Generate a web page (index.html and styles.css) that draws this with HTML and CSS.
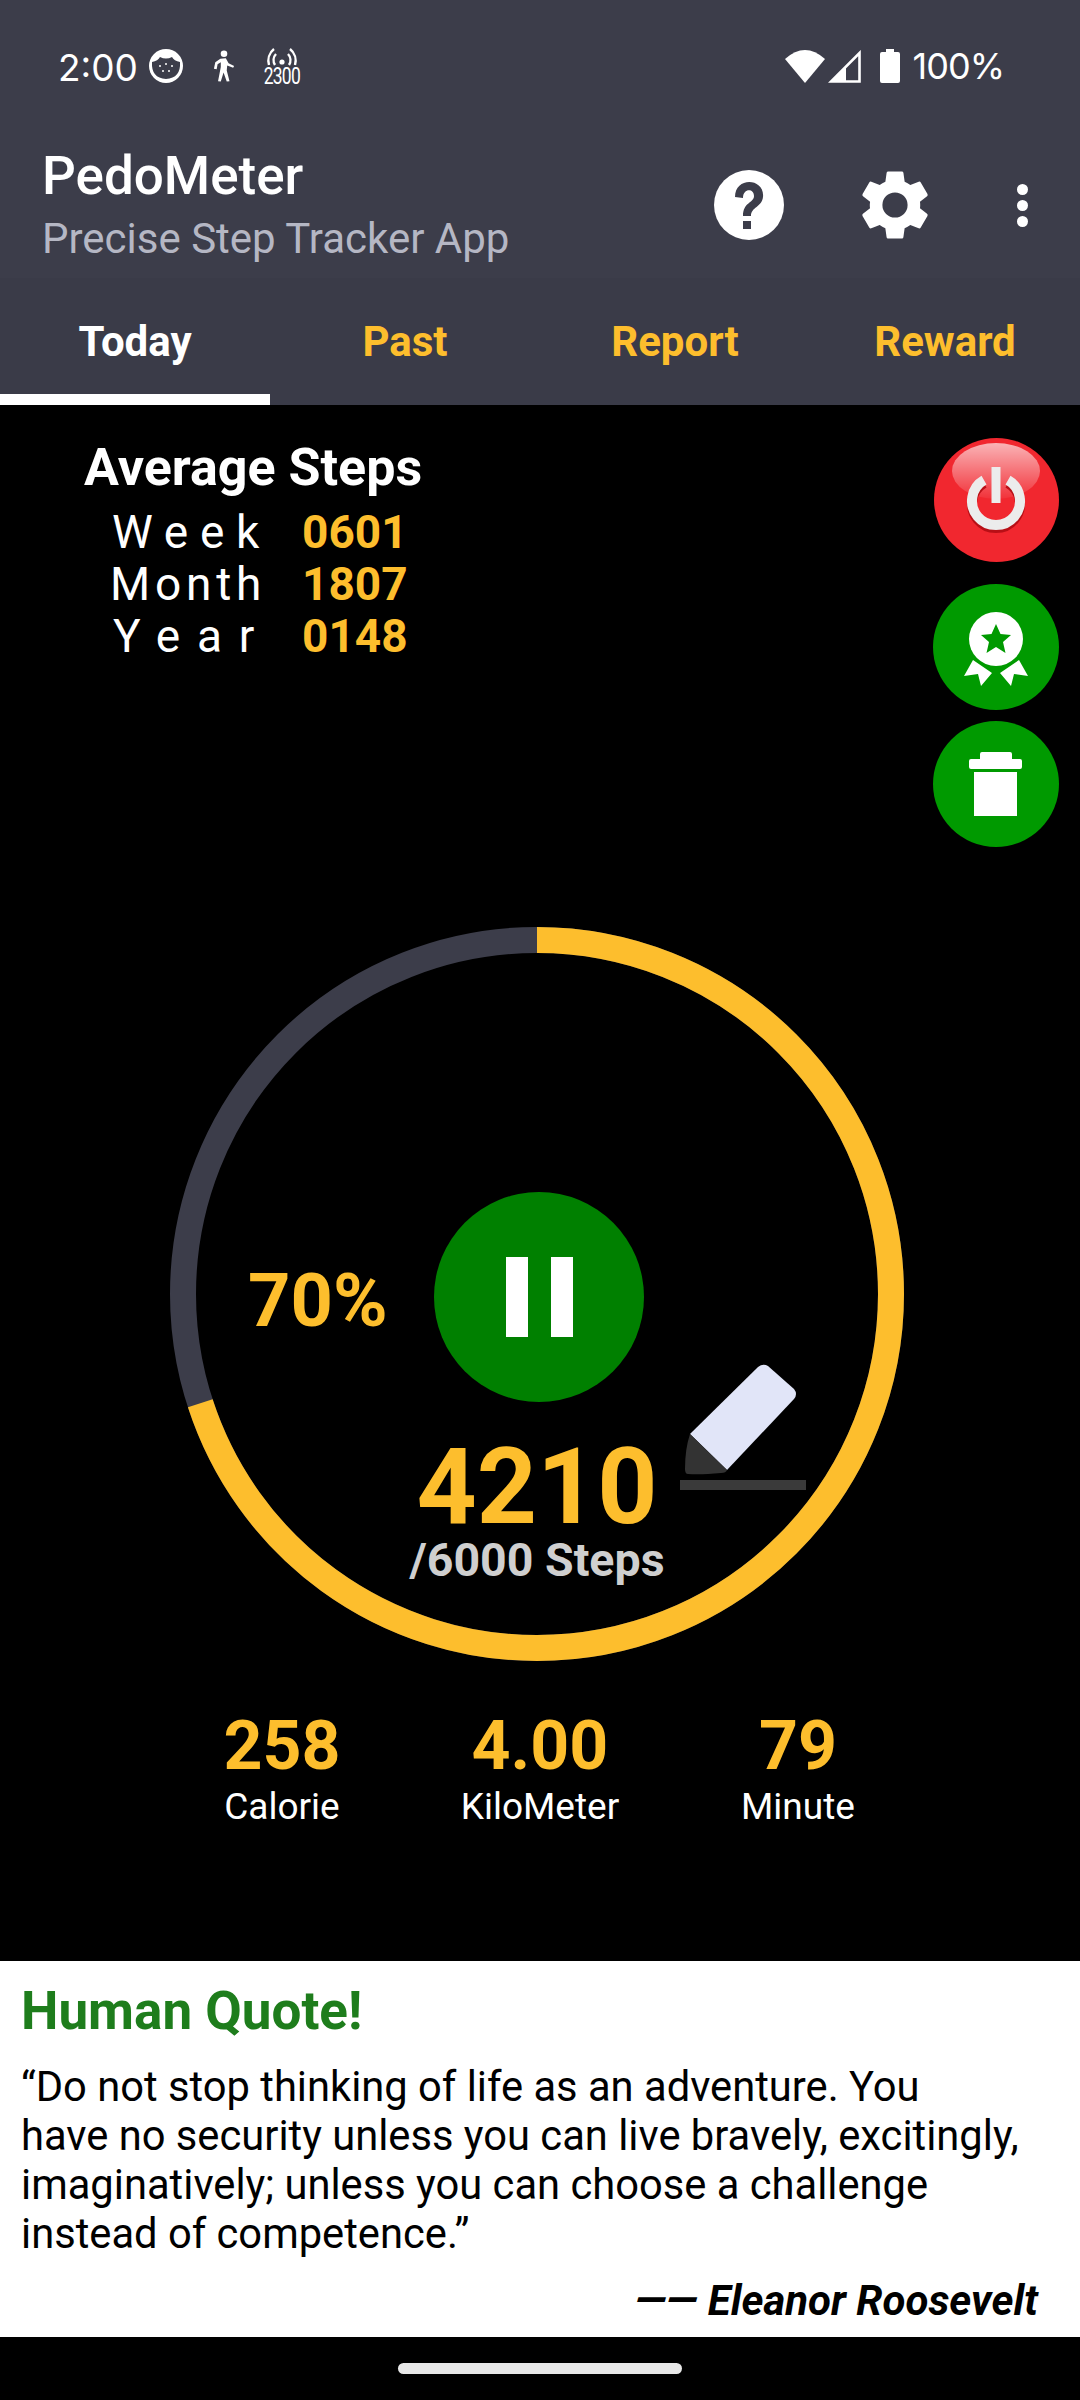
FILE: index.html
```html
<!DOCTYPE html>
<html lang="en">
<head>
    <meta charset="UTF-8">
    <meta name="viewport" content="width=device-width, initial-scale=1.0">
    <title>PedoMeter</title>
    <link rel="stylesheet" href="styles.css">
</head>
<body>
    <div class="top">
        <div class="status">
            <div class="status-side">
                <span class="time">2:00</span>
                <svg class="st-face" viewBox="0 0 34 34"><circle cx="17" cy="17" r="17" fill="#fff"/><path d="M3 13 Q9 12 11 8 Q17 11 23 8 Q25 12 31 13 Q32 29 17 30 Q2 29 3 13Z" fill="#3c3d4a"/><g fill="#fff"><circle cx="11" cy="17" r="1"/><circle cx="17" cy="15" r="1"/><circle cx="23" cy="17" r="1"/><circle cx="14" cy="22" r="1"/><circle cx="20" cy="22" r="1"/></g></svg>
                <svg class="st-walk" viewBox="0 0 24 34"><circle cx="12" cy="3.6" r="3.6" fill="#fff"/><path d="M8 9 L14 8.5 L17 14 L23 17 L22 19 L15.5 16.5 L15 22 L18 33.5 L15 34 L11.5 24 L8.5 34 L5.5 33.5 L8.5 18 L8.5 13 L5 15 L4 20.5 L1 20 L2.5 13Z" fill="#fff"/></svg>
                <span class="st-hotspot">
                    <svg viewBox="0 0 34 20"><g fill="none" stroke="#fff" stroke-width="2.4"><path d="M10 17 A9 9 0 0 1 11 6"/><path d="M24 17 A9 9 0 0 0 23 6"/><path d="M4 17 A15 15 0 0 1 9 1"/><path d="M30 17 A15 15 0 0 0 25 1"/></g><circle cx="17" cy="14" r="2.6" fill="#fff"/></svg>
                    <span>2300</span>
                </span>
            </div>
            <div class="status-side">
                <svg class="st-wifi" viewBox="0 0 40 33"><path d="M0 9 Q20 -9 40 9 L20 33Z" fill="#fff"/></svg>
                <svg class="st-signal" viewBox="0 0 33 33"><path d="M31.5 3 V31.5 H3Z" fill="none" stroke="#fff" stroke-width="2.6"/><path d="M18 16 V32 H2Z" fill="#fff"/></svg>
                <svg class="st-batt" viewBox="0 0 20 34"><path d="M6 0 H14 V3 H18 Q20 3 20 5 V32 Q20 34 18 34 H2 Q0 34 0 32 V5 Q0 3 2 3 H6Z" fill="#fff"/></svg>
                <span class="batt-text">100%</span>
            </div>
        </div>

        <div class="appbar">
            <div class="titles">
                <div class="app-name">PedoMeter</div>
                <div class="app-sub">Precise Step Tracker App</div>
            </div>
            <div class="actions">
                <svg class="help" viewBox="0 0 70 70"><circle cx="35" cy="35" r="35" fill="#fff"/><path d="M21 27 C21 6 51 8 49 27 C48 37 37 37 37 46 H29 C29 32 40 33 40 26 C40 18 29 18 29 28Z" fill="#3c3d4a"/><rect x="29" y="51" width="8" height="8" fill="#3c3d4a"/></svg>
                <svg class="gear" viewBox="0 0 24 24"><path fill="#fff" d="M19.14 12.94c.04-.3.06-.61.06-.94s-.02-.64-.07-.94l2.03-1.58a.49.49 0 0 0 .12-.61l-1.92-3.32a.49.49 0 0 0-.59-.22l-2.39.96c-.5-.38-1.03-.7-1.62-.94l-.36-2.54a.48.48 0 0 0-.48-.41h-3.84a.48.48 0 0 0-.47.41l-.36 2.54c-.59.24-1.13.57-1.62.94l-2.39-.96a.49.49 0 0 0-.59.22L2.74 8.87a.48.48 0 0 0 .12.61l2.03 1.58c-.05.3-.09.63-.09.94s.02.64.07.94l-2.03 1.58a.49.49 0 0 0-.12.61l1.92 3.32c.12.22.37.29.59.22l2.39-.96c.5.38 1.03.7 1.62.94l.36 2.54c.05.24.24.41.48.41h3.84c.24 0 .44-.17.47-.41l.36-2.54c.59-.24 1.13-.56 1.62-.94l2.39.96c.22.08.47 0 .59-.22l1.92-3.32a.48.48 0 0 0-.12-.61l-2.01-1.58zM12 15.6A3.6 3.6 0 1 1 12 8.4a3.6 3.6 0 0 1 0 7.2z"/></svg>
                <div class="dots"><i></i><i></i><i></i></div>
            </div>
        </div>

        <div class="tabs">
            <div class="tab active">Today</div>
            <div class="tab">Past</div>
            <div class="tab">Report</div>
            <div class="tab">Reward</div>
        </div>
    </div>

    <div class="main">
        <div class="upper">
            <div class="avg">
                <h2>Average Steps</h2>
                <div class="avg-row"><span class="avg-label week">Week</span><b>0601</b></div>
                <div class="avg-row"><span class="avg-label month">Month</span><b>1807</b></div>
                <div class="avg-row"><span class="avg-label year">Year</span><b>0148</b></div>
            </div>
            <div class="fabs">
                <svg class="fab-power" viewBox="0 0 125 124">
                    <defs>
                        <linearGradient id="gloss" x1="0" y1="0" x2="0" y2="1"><stop offset="0" stop-color="#fff" stop-opacity=".65"/><stop offset="1" stop-color="#fff" stop-opacity=".05"/></linearGradient>
                    </defs>
                    <ellipse cx="62.5" cy="62" rx="62.5" ry="62" fill="#f1272f"/>
                    <ellipse cx="62" cy="33" rx="44" ry="28" fill="url(#gloss)"/>
                    <path d="M74 45.200 A24 24 0 1 1 50 45.200" fill="none" stroke="#b80f16" stroke-width="10"/>
                    <path d="M74 42.200 A24 24 0 1 1 50 42.200" fill="none" stroke="#ececec" stroke-width="10"/>
                    <rect x="57.500" y="29" width="9" height="36" fill="#ececec"/>
                </svg>
                <svg class="fab-medal" viewBox="0 0 126 126">
                    <circle cx="63" cy="63" r="63" fill="#009a00"/>
                    <circle cx="63" cy="55" r="27" fill="#fff"/>
                    <path d="M63 40 L67.500 50 L78 51 L70 58 L72.500 69 L63 63 L53.500 69 L56 58 L48 51 L58.500 50Z" fill="#009a00"/>
                    <path d="M40 76 L59 89 L48 102 L45 90 L31 92Z" fill="#fff"/>
                    <path d="M86 76 L67 89 L78 102 L81 90 L95 92Z" fill="#fff"/>
                </svg>
                <svg class="fab-trash" viewBox="0 0 126 126">
                    <circle cx="63" cy="63" r="63" fill="#009a00"/>
                    <path d="M47 33 Q47 31 49 31 H77 Q79 31 79 33 V38 H87 Q89 38 89 40 V46 Q89 48 87 48 H38 Q36 48 36 46 V40 Q36 38 38 38 H47Z" fill="#fff"/>
                    <rect x="41" y="51" width="43" height="44" fill="#fff"/>
                </svg>
            </div>
        </div>

        <div class="ring-wrap">
            <svg class="ring" viewBox="0 0 734 734">
                <circle cx="367" cy="367" r="354" fill="none" stroke="#3c3d4a" stroke-width="26"/>
                <circle cx="367" cy="367" r="354" fill="none" stroke="#fdbe2d" stroke-width="26" pathLength="100" stroke-dasharray="70 30" transform="rotate(-90 367 367)"/>
            </svg>
            <div class="percent">70%</div>
            <div class="pause"><i></i><i></i></div>
            <svg class="edit" viewBox="0 0 112 112">
                <path d="M5 70 L73 3 Q78 -1 83 2 L109 25 Q113 30 109 35 L42 106Z" fill="#e1e5f8"/>
                <path d="M5 70 L42 106 Q41 109 36 109 Q15 111 3 110 Q0 110 0 105 Q0 85 5 70Z" fill="#333"/>
            </svg>
            <div class="edit-line"></div>
            <div class="count">4210</div>
            <div class="goal">/6000 Steps</div>
        </div>

        <div class="stats">
            <div class="stat"><b>258</b><span>Calorie</span></div>
            <div class="stat"><b>4.00</b><span>KiloMeter</span></div>
            <div class="stat"><b>79</b><span>Minute</span></div>
        </div>
    </div>

    <div class="quote">
        <h3>Human Quote!</h3>
        <p>“Do not stop thinking of life as an adventure. You<br>have no security unless you can live bravely, excitingly,<br>imaginatively; unless you can choose a challenge<br>instead of competence.”</p>
        <div class="author">—— Eleanor Roosevelt</div>
    </div>

    <div class="navbar"><div class="pill"></div></div>
</body>
</html>
```

FILE: styles.css
```css
* {
    box-sizing: border-box;
}

body {
    margin: 0;
    width: 1080px;
    height: 2400px;
    background: #000;
    font-family: Roboto, sans-serif;
    color: #fff;
    display: flex;
    flex-direction: column;
    overflow: hidden;
}

.top {
    background: #3c3d4a;
    height: 405px;
    flex: none;
}

.status {
    height: 132px;
    padding: 0 76px 0 58px;
    display: flex;
    justify-content: space-between;
    align-items: center;
}

.status-side {
    display: flex;
    align-items: center;
}

.time {
    font-family: Inter, sans-serif;
    font-size: 37px;
    margin-top: 2px;
    width: 91px;
}

.st-face {
    width: 34px;
    height: 34px;
    margin-right: 30px;
}

.st-walk {
    width: 22px;
    height: 34px;
    margin-right: 28px;
}

.st-hotspot {
    display: flex;
    flex-direction: column;
    align-items: center;
    width: 37px;
    margin-top: 2px;
}

.st-hotspot svg {
    width: 34px;
    height: 20px;
}

.st-hotspot span {
    font-size: 23px;
    line-height: 18px;
    letter-spacing: -1px;
    transform: scaleX(.76);
}

.st-wifi {
    width: 40px;
    height: 33px;
    margin-right: 3px;
}

.st-signal {
    width: 33px;
    height: 33px;
    margin-right: 19px;
}

.st-batt {
    width: 20px;
    height: 34px;
    margin-right: 13px;
}

.batt-text {
    font-family: Inter, sans-serif;
    font-size: 36px;
    letter-spacing: -1px;
}

.appbar {
    height: 146px;
    padding: 0 52px 0 42px;
    display: flex;
    justify-content: space-between;
    align-items: center;
}

.app-name {
    font-size: 53px;
    font-weight: 500;
    line-height: 58px;
    margin-top: -2px;
}

.app-sub {
    font-size: 42px;
    line-height: 44px;
    margin-top: 12px;
    color: #b5b7c4;
}

.actions {
    display: flex;
    align-items: center;
    margin-top: 0;
}

.help {
    width: 70px;
    height: 70px;
    margin-right: 69px;
}

.gear {
    width: 84px;
    height: 84px;
    margin-right: 80px;
}

.dots {
    display: flex;
    flex-direction: column;
    gap: 5px;
}

.dots i {
    width: 11px;
    height: 11px;
    border-radius: 50%;
    background: #fff;
}

.tabs {
    height: 127px;
    background: #3a3b48;
    display: grid;
    grid-template-columns: repeat(4, 270px);
}

.tab {
    display: flex;
    align-items: center;
    justify-content: center;
    font-size: 42px;
    font-weight: 700;
    color: #fdbe2d;
}

.tab.active {
    color: #fff;
    border-bottom: 11px solid #fff;
    padding-top: 11px;
}

.main {
    flex: 1;
    display: flex;
    flex-direction: column;
    align-items: center;
}

.upper {
    width: 100%;
    height: 522px;
    padding: 33px 21px 0 84px;
    display: flex;
    justify-content: space-between;
    align-items: flex-start;
}

.avg h2 {
    margin: 0;
    font-size: 52px;
    font-weight: 700;
    line-height: 60px;
}

.avg-row {
    display: flex;
    align-items: center;
    height: 52px;
    font-size: 46px;
}

.avg-row:first-of-type {
    margin-top: 8px;
}

.avg-label {
    width: 218px;
    white-space: nowrap;
}

.avg-label.week {
    padding-left: 28px;
    letter-spacing: 11.7px;
}

.avg-label.month {
    padding-left: 26px;
    letter-spacing: 4.8px;
}

.avg-label.year {
    padding-left: 29px;
    letter-spacing: 16.7px;
}

.avg-row b {
    color: #fdbe2d;
}

.fabs {
    display: flex;
    flex-direction: column;
    align-items: center;
}

.fab-power {
    width: 125px;
    height: 124px;
}

.fab-medal {
    width: 126px;
    height: 126px;
    margin-top: 22px;
}

.fab-trash {
    width: 126px;
    height: 126px;
    margin-top: 11px;
}

.ring-wrap {
    position: relative;
    width: 734px;
    height: 734px;
    flex: none;
    margin-left: -6px;
}

.ring {
    display: block;
    width: 734px;
    height: 734px;
}

.percent {
    position: absolute;
    left: 78px;
    top: 332px;
    font-size: 74px;
    font-weight: 700;
    line-height: 84px;
    color: #fdbe2d;
}

.pause {
    position: absolute;
    left: 264px;
    top: 265px;
    width: 210px;
    height: 210px;
    border-radius: 50%;
    background: #008000;
    display: flex;
    align-items: center;
    justify-content: center;
    gap: 23px;
}

.pause i {
    width: 22px;
    height: 80px;
    background: #fff;
}

.edit {
    position: absolute;
    left: 515px;
    top: 437px;
    width: 112px;
    height: 112px;
}

.edit-line {
    position: absolute;
    left: 510px;
    top: 553px;
    width: 126px;
    height: 10px;
    background: #3a3a3a;
}

.count {
    position: absolute;
    left: 0;
    right: 0;
    top: 516px;
    text-align: center;
    font-size: 105px;
    font-weight: 700;
    line-height: 90px;
    color: #fdbe2d;
}

.goal {
    position: absolute;
    left: 0;
    right: 0;
    top: 610px;
    text-align: center;
    font-size: 46.500px;
    font-weight: 700;
    line-height: 46px;
    color: #cfcfcf;
}

.stats {
    margin-top: 47px;
    display: grid;
    grid-template-columns: 258px 258px 258px;
}

.stat {
    display: flex;
    flex-direction: column;
    align-items: center;
}

.stat b {
    font-size: 68px;
    line-height: 77px;
    color: #fdbe2d;
}

.stat span {
    font-size: 37px;
    line-height: 44px;
}

.quote {
    flex: none;
    height: 376px;
    background: #fff;
    color: #000;
    padding: 22px 42px 0 21px;
}

.quote h3 {
    margin: 0;
    font-size: 53px;
    font-weight: 700;
    line-height: 56px;
    color: #1e7d1c;
}

.quote p {
    margin: 23px 0 0;
    font-size: 41.700px;
    line-height: 49px;
}

.author {
    margin-top: 18px;
    text-align: right;
    font-size: 42px;
    font-weight: 700;
    font-style: italic;
}

.navbar {
    flex: none;
    height: 63px;
    display: flex;
    justify-content: center;
    padding-top: 26px;
}

.pill {
    width: 284px;
    height: 11px;
    border-radius: 6px;
    background: #e8e8e8;
}
```
